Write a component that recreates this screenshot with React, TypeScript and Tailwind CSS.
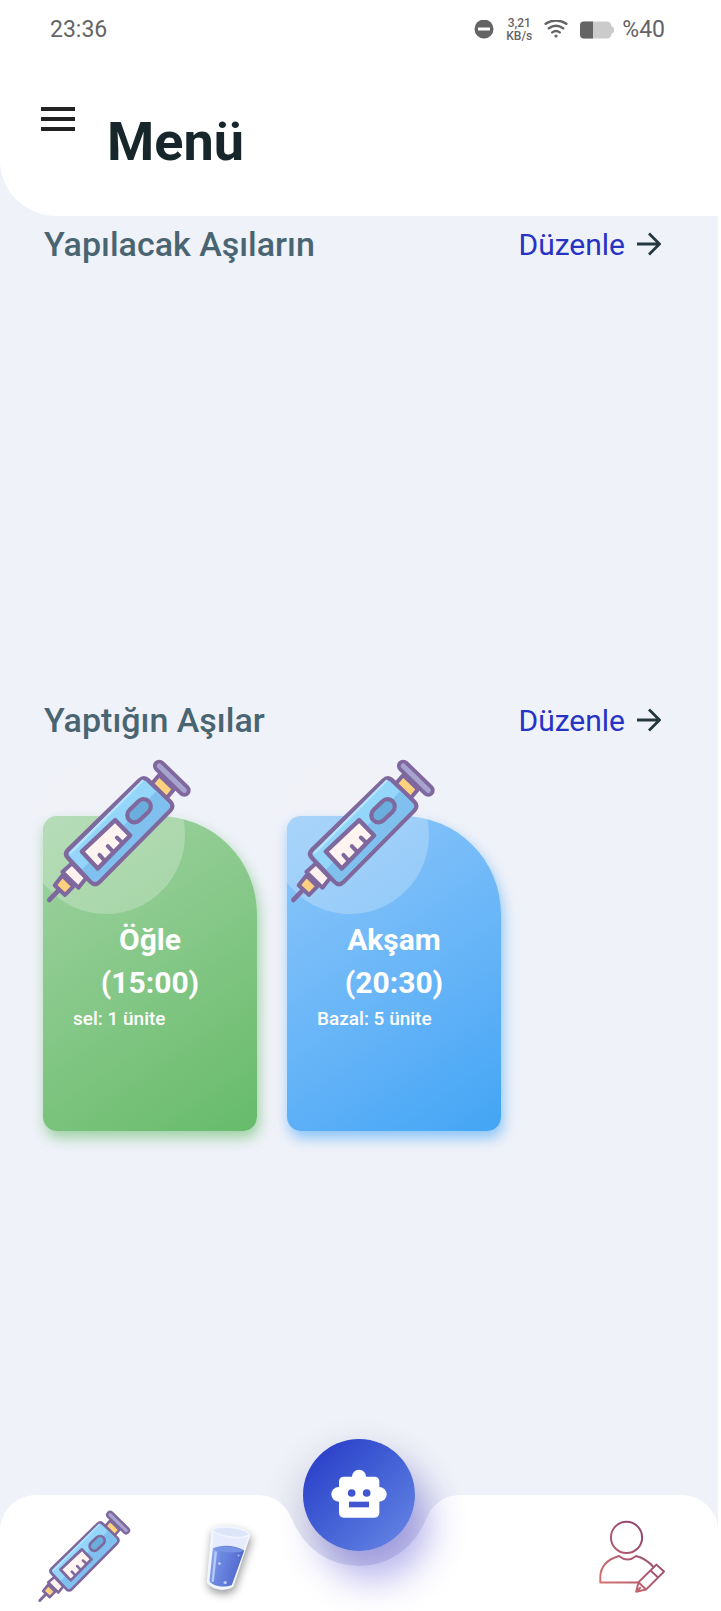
import React from "react";

function Syringe({ className }: { className: string }) {
  return (
    <svg viewBox="45 50 440 440" className={className} fill="none" stroke="#7f689e" strokeLinejoin="round" strokeLinecap="round" aria-hidden="true">
      <path d="M85 450 58 478" strokeWidth="14" />
      <path d="M97 405 130 437 105 463 74 434Z" fill="#fcd07e" strokeWidth="12" />
      <path d="M126 368 168 412 145 441 97 394Z" fill="#fff2ee" strokeWidth="12" />
      <path d="M387 104 431 147 408 174 364 131Z" fill="#fdd27e" strokeWidth="12" />
      <path d="M387 77 462 150" strokeWidth="38" />
      <path d="M387 77 462 150" stroke="#a8a4d0" strokeWidth="15" />
      <path
        d="M328 120Q341 107 354 120L420 184Q432 197 420 210L208 424Q195 437 182 424L114 352Q102 340 114 328Z"
        fill="#94d5fa"
        strokeWidth="13"
      />
      <path d="M378 152 416 189Q424 197 416 205L204 419Q195 427 187 419L156 387Z" fill="#80c0ee" stroke="none" />
      <path d="M122 336 337 121" stroke="#b5e6fd" strokeWidth="7" />
      <path d="M313 224 340 198" strokeWidth="56" />
      <path d="M313 224 340 198" stroke="#69aedd" strokeWidth="31" />
      <path d="M255 239 300 285 203 384 155 333Z" fill="#fff4f0" strokeWidth="13" />
      <path d="M224 361 208 343M250 335 233 317M277 307 260 291" strokeWidth="12" />
    </svg>
  );
}

function Glass() {
  return (
    <svg viewBox="600 110 170 230" className="h-[77px] w-[57px] overflow-visible drop-shadow-[1px_4px_4px_rgba(0,0,0,0.4)]" aria-hidden="true">
      <defs>
        <linearGradient id="water" x1="0" y1="0" x2="1" y2="0.3">
          <stop offset="0" stopColor="#9db6f1" />
          <stop offset="0.35" stopColor="#6d8be2" />
          <stop offset="1" stopColor="#5268cd" />
        </linearGradient>
      </defs>
      <path d="M637 136C655 118 742 128 754 154L703 309C680 326 638 320 623 297Z" fill="#f1f5fe" />
      <path d="M643 145C665 161 720 172 746 160L733 200C706 187 665 185 641 196Z" fill="#e6ecfc" />
      <path d="M643 140C660 127 733 134 747 153C726 168 657 157 643 140Z" fill="#dde5f9" />
      <path d="M641 195C665 182 710 185 735 201L698 304C675 314 643 308 631 293Z" fill="url(#water)" />
      <path d="M641 196C664 185 710 187 735 202C710 211 661 207 641 196Z" fill="#7892e4" />
      <path d="M650 207 641 292" stroke="#b8cbf8" strokeWidth="7" strokeLinecap="round" />
      <circle cx="661" cy="240" r="4" fill="#c5d4fb" />
      <circle cx="678" cy="297" r="5" fill="#b9cbfa" />
      <circle cx="718" cy="216" r="3" fill="#a9bdf6" />
    </svg>
  );
}

function ProfileEdit() {
  return (
    <svg viewBox="115 115 205 225" className="h-[75px] w-[68px]" fill="none" stroke="url(#profile)" strokeWidth="6" strokeLinejoin="round" aria-hidden="true">
      <defs>
        <linearGradient id="profile" gradientUnits="userSpaceOnUse" x1="130" y1="310" x2="275" y2="160">
          <stop offset="0" stopColor="#d4736f" />
          <stop offset="1" stopColor="#8c4271" />
        </linearGradient>
      </defs>
      <circle cx="201" cy="170" r="47" />
      <path d="M240 306H122V290Q122 243 178 226Q204 247 230 226Q262 235 283 260" />
      <path d="M291 252 314 273 260 327 237 305ZM274 270 296 291M237 305 230 334 260 327M230 334 244 320" />
    </svg>
  );
}

function Robot() {
  return (
    <svg viewBox="180 145 168 150" className="-mt-1 h-[50px] w-[56px]" fill="#fff" aria-hidden="true">
      <rect x="204" y="171" width="121" height="123" rx="14" />
      <circle cx="264" cy="171" r="21" />
      <circle cx="203" cy="224" r="22" />
      <circle cx="325" cy="224" r="22" />
      <g fill="#4254cf">
        <circle cx="242" cy="220" r="11.5" />
        <circle cx="287" cy="220" r="11.5" />
        <rect x="234" y="246" width="60" height="17" />
      </g>
    </svg>
  );
}

function StatusBar() {
  return (
    <div className="flex h-[60px] items-center justify-between pr-[53px] pl-[50px] text-[23px] text-[#646464]">
      <time>23:36</time>
      <div className="flex items-center">
        <svg viewBox="0 0 20 20" className="mr-3 size-5" aria-hidden="true">
          <circle cx="10" cy="9" r="9.5" fill="#646464" />
          <path d="M4 9h12" stroke="#fff" strokeWidth="3" />
        </svg>
        <span className="mr-3 text-center text-[12px] leading-[13px] font-medium">
          3,21
          <br />
          KB/s
        </span>
        <svg viewBox="0 0 24 20" className="mr-3 h-5 w-6" fill="none" stroke="#646464" strokeWidth="2.4" strokeLinecap="round" aria-hidden="true">
          <path d="M1.6 3.8Q12-2.6 22.4 3.8M4.8 8.200Q12 3.200 19.200 8.200M8.200 12.400Q12 9.600 15.800 12.400" />
          <circle cx="12" cy="16" r="1.600" fill="#646464" stroke="none" />
        </svg>
        <svg viewBox="0 0 34 18" className="mr-2 h-[18px] w-[34px]" aria-hidden="true">
          <path d="M4 0.500H27Q31 0.500 31.500 5L34 7V11L31.500 13Q31 17.500 27 17.500H4Q0 17.500 0 13.500V4.500Q0 0.500 4 0.500Z" fill="#cbcbcb" />
          <path d="M13 0.500V17.500H4Q0 17.500 0 13.500V4.500Q0 0.500 4 0.500Z" fill="#646464" />
        </svg>
        <span>%40</span>
      </div>
    </div>
  );
}

function SectionHeading({ title }: { title: string }) {
  return (
    <div className="flex h-14 items-center justify-between pr-[57px] pl-11">
      <h2 className="text-[34px] font-medium text-[#4a6572]">{title}</h2>
      <a href="#duzenle" className="flex items-center gap-3 text-[30px] text-[#2633c5]">
        Düzenle
        <svg viewBox="0 0 24 24" className="size-6" fill="none" stroke="#253840" strokeWidth="2.8" aria-hidden="true">
          <path d="M0 12H22M12 1.500 22.500 12 12 22.500" />
        </svg>
      </a>
    </div>
  );
}

const doses = [
  {
    meal: "Öğle",
    time: "(15:00)",
    dose: "sel: 1 ünite",
    tone: "from-[#a0d3a2] to-[#66bb6a] shadow-[2px_7px_14px_rgba(102,187,106,0.6)]",
  },
  {
    meal: "Akşam",
    time: "(20:30)",
    dose: "Bazal: 5 ünite",
    tone: "from-[#8dc7fa] to-[#42a5f5] shadow-[2px_7px_14px_rgba(66,165,245,0.6)]",
  },
];

function DoseCard({ meal, time, dose, tone }: (typeof doses)[number]) {
  return (
    <li
      className={`relative h-[315px] w-[214px] rounded-[14px] rounded-tr-[98px] bg-linear-146 px-[30px] pt-[102px] text-white ${tone}`}
    >
      <div className="absolute inset-x-0 top-0 h-[100px] overflow-hidden rounded-tl-[14px]">
        <div className="absolute -top-[60px] -left-4 size-[158px] rounded-full bg-[#fafafa]/25" />
      </div>
      <div className="absolute -top-[60px] -left-4 h-[60px] w-[158px] overflow-hidden">
        <div className="size-[158px] rounded-full bg-[#fbf2f0]/15" />
      </div>
      <Syringe className="absolute -top-[59px] left-[2px] size-[147px]" />
      <h3 className="text-center text-[30px] leading-[43px] font-bold">
        {meal}
        <br />
        {time}
      </h3>
      <p className="text-[19px] leading-[30px] font-medium">{dose}</p>
    </li>
  );
}

function BottomNav() {
  return (
    <nav className="relative h-[116px]">
      <div className="absolute inset-0 flex" aria-hidden="true">
        <div className="-mr-px flex-1 rounded-tl-[36px] bg-white" />
        <svg viewBox="0 0 202 116" className="h-[116px] w-[202px] overflow-visible">
          <defs>
            <radialGradient id="notch" gradientUnits="userSpaceOnUse" cx="101" cy="20" r="100">
              <stop offset="0.3" stopColor="#50506e" stopOpacity="0.13" />
              <stop offset="0.6" stopColor="#50506e" stopOpacity="0.08" />
              <stop offset="0.85" stopColor="#50506e" stopOpacity="0.02" />
              <stop offset="1" stopColor="#50506e" stopOpacity="0" />
            </radialGradient>
          </defs>
          <circle cx="101" cy="0" r="100" fill="url(#notch)" />
          <path
            d="M0 0A35.500 35.500 0 0 1 33.400 23.400L34.300 24.300A71 71 0 0 0 167.700 24.300L168.600 23.400A35.500 35.500 0 0 1 202 0V116H0Z"
            fill="#fff"
          />
        </svg>
        <div className="-ml-px flex-1 rounded-tr-[36px] bg-white" />
      </div>
      <div className="relative flex h-full items-start justify-between pr-[52px] pl-[37px]">
        <div className="flex">
          <button type="button" aria-label="Aşılar" className="pt-[14px]">
            <Syringe className="size-[94px]" />
          </button>
          <button type="button" aria-label="Su" className="ml-[68px] pt-[18px]">
            <Glass />
          </button>
        </div>
        <button type="button" aria-label="Profil" className="pt-6">
          <ProfileEdit />
        </button>
      </div>
      <button
        type="button"
        aria-label="Asistan"
        className="absolute -top-14 left-1/2 flex size-28 -translate-x-1/2 items-center justify-center rounded-full bg-linear-to-br from-[#2633c5] to-[#6a88e5] shadow-[14px_28px_36px_rgba(60,50,205,0.38)]"
      >
        <Robot />
      </button>
    </nav>
  );
}

export default function App() {
  return (
    <div className="flex min-h-screen bg-white pr-[3px] font-['Roboto',sans-serif]">
      <div className="flex flex-1 flex-col overflow-hidden bg-[#f0f2f9]">
        <header className="rounded-bl-[56px] bg-white pb-[42px]">
          <StatusBar />
          <div className="flex items-start gap-8 pt-[47px] pl-[41px]">
            <button type="button" aria-label="Menüyü aç" className="flex w-[34px] flex-col gap-[6px]">
              <span className="h-1 w-full bg-[#222]" />
              <span className="h-1 w-full bg-[#222]" />
              <span className="h-1 w-full bg-[#222]" />
            </button>
            <h1 className="pt-[3px] text-[54px] leading-16 font-bold text-[#17262a]">Menü</h1>
          </div>
        </header>
        <main className="flex-1">
          <section className="min-h-[476px]">
            <SectionHeading title="Yapılacak Aşıların" />
          </section>
          <section>
            <SectionHeading title="Yaptığın Aşılar" />
            <ul className="flex gap-[30px] pt-[68px] pl-[43px]">
              {doses.map((item) => (
                <DoseCard key={item.meal} {...item} />
              ))}
            </ul>
          </section>
        </main>
        <BottomNav />
      </div>
    </div>
  );
}
